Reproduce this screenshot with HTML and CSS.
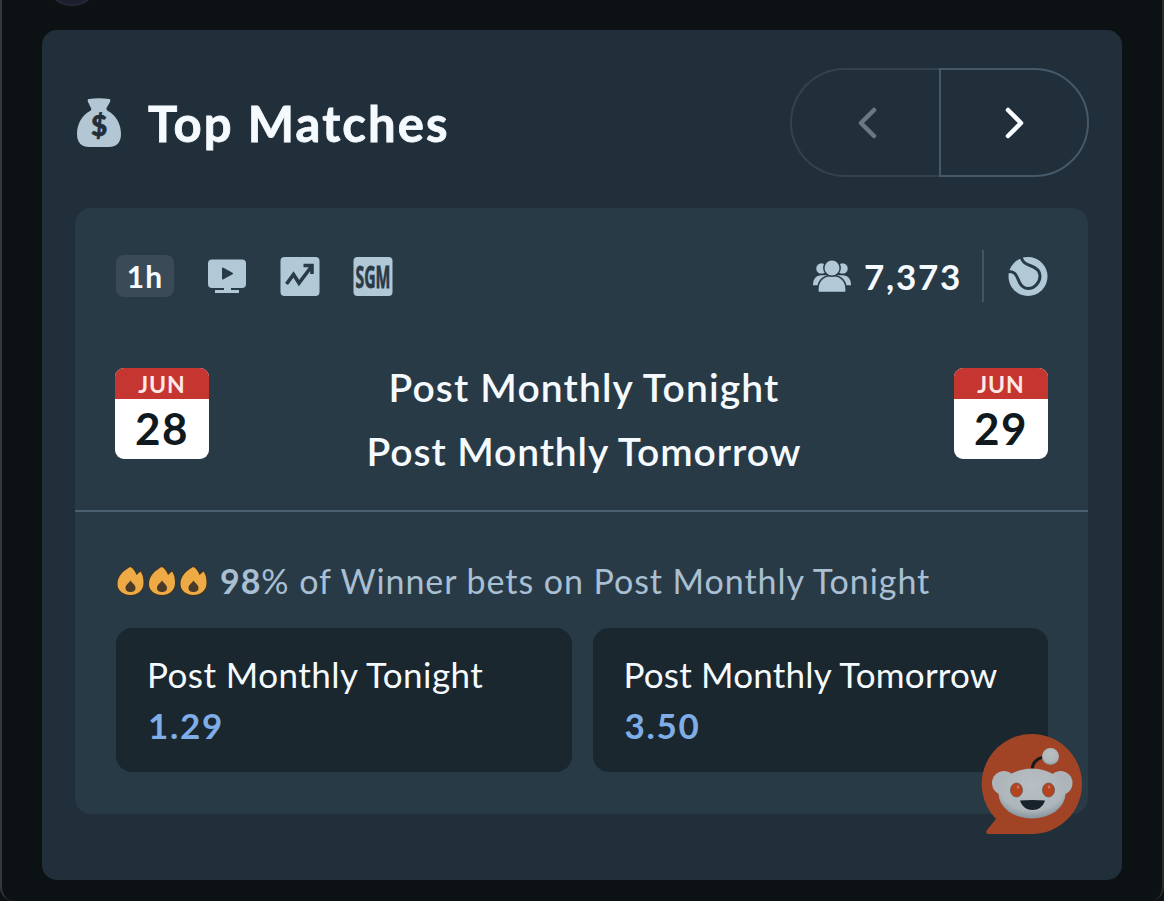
FILE: index.html
```
<!DOCTYPE html>
<html lang="en">
<head>
    <meta charset="UTF-8">
    <meta name="viewport" content="width=device-width, initial-scale=1.0">
    <title>Top Matches</title>
    <link rel="stylesheet" href="styles.css">
</head>
<body>
    <div class="frame">
        <div class="avatar-edge"></div>
        <section class="panel">
            <!-- Header Section -->
            <header class="panel-header">
                <svg class="bag-icon" viewBox="0 0 44 50">
                    <path d="M12 1Q22-0.500 32 1Q34 1 33 4L29.500 10Q29 12 31 13C39 17 44 26 44 36C44 45 39 49 32 49H12C5 49 0 45 0 36C0 26 5 17 13 13Q15 12 14 10L11 4Q10 1 12 1Z" fill="#b3c6d4"/>
                    <text x="22" y="38" class="bag-text">$</text>
                </svg>
                <h1>Top Matches</h1>
                <nav class="pager">
                    <button class="prev" aria-label="Previous">
                        <svg viewBox="0 0 20 32"><path d="M17 3L4 16L17 29"/></svg>
                    </button>
                    <button class="next" aria-label="Next">
                        <svg viewBox="0 0 20 32"><path d="M4 3L17 16L4 29"/></svg>
                    </button>
                </nav>
            </header>

            <!-- Match Card -->
            <article class="card">
                <div class="match">
                    <div class="meta">
                        <span class="time">1h</span>
                        <svg class="icon" viewBox="0 0 40 40">
                            <path d="M5 3.500H35Q39 3.500 39 7.500V28Q39 32 35 32H24V34H32V37H8V34H17V32H5Q1 32 1 28V7.500Q1 3.500 5 3.500Z" fill="#b1c8d6"/>
                            <path d="M16 12.500L25 17.500L16 22.500Z" fill="#293a47" stroke="#293a47" stroke-width="2" stroke-linejoin="round"/>
                        </svg>
                        <svg class="icon" viewBox="0 0 40 40">
                            <rect x=".5" y="1" width="39" height="39" rx="4" fill="#b1c8d6"/>
                            <path d="M6.500 28L13.500 18.500L19 27L31.500 10.500M23.500 9.500H32V18" fill="none" stroke="#293a47" stroke-width="3.600"/>
                        </svg>
                        <svg class="icon sgm-icon" viewBox="0 0 40 40">
                            <rect x=".5" y="1" width="39" height="39" rx="4" fill="#b1c8d6"/>
                            <text x="2.500" y="31.500" textLength="35" lengthAdjust="spacingAndGlyphs" class="sgm">SGM</text>
                        </svg>
                        <div class="viewers">
                            <svg class="people-icon" viewBox="0 0 40 32">
                                <g fill="#b1c8d6" stroke="#293a47" stroke-width="1.500">
                                    <circle cx="9.500" cy="8.500" r="6"/>
                                    <circle cx="30.500" cy="8.500" r="6"/>
                                    <path d="M0 26Q0 15 9 14.500H31Q40 15 40 26Z"/>
                                    <path d="M6 32.500C5 22 10 15.500 20 15.500S35 22 34 32.500Z"/>
                                    <circle cx="20" cy="8" r="8.200"/>
                                </g>
                            </svg>
                            <span class="count">7,373</span>
                            <span class="bar"></span>
                            <svg class="icon" viewBox="0 0 40 40">
                                <circle cx="20" cy="20.500" r="19.500" fill="#b1c8d6"/>
                                <path d="M-1 15.500C6 15 8 18 10 23C12 29 15 32.500 20 32.500C27 32.500 32 26 32 20C32 14 28 11.500 22 9.500C17 8 14 6 12.500-1" fill="none" stroke="#293a47" stroke-width="3"/>
                            </svg>
                        </div>
                    </div>

                    <div class="teams">
                        <div class="calendar"><span class="month">JUN</span><span class="day">28</span></div>
                        <div class="names">
                            <div class="name-tonight">Post Monthly Tonight</div>
                            <div class="name-tomorrow">Post Monthly Tomorrow</div>
                        </div>
                        <div class="calendar"><span class="month">JUN</span><span class="day">29</span></div>
                    </div>
                </div>

                <!-- Betting Section -->
                <div class="bets">
                    <div class="trend">
                        <svg class="fires" viewBox="0 0 92 32">
                            <defs>
                                <g id="flame">
                                    <path d="M14 1C9 4 1.500 9 1.500 18C1.500 25 8 29 14.500 29S27.500 25 27.500 17C27.500 12 26.500 8 24.500 5.500L20.500 9C19 5 17 2 14 1Z" fill="#edaa45" stroke="#423321" stroke-width="2" paint-order="stroke"/>
                                    <path d="M14.500 14.500C12 18 9.500 19 9.500 22C9.500 25 12 26 14.500 26S19.500 25 19.500 22C19.500 19 17 18 14.500 14.500Z" fill="#4a3b29"/>
                                </g>
                            </defs>
                            <use href="#flame" x="0" y="0"/>
                            <use href="#flame" x="31.500" y="0"/>
                            <use href="#flame" x="63" y="0"/>
                        </svg>
                        <p><b>98</b>% of Winner bets on Post Monthly Tonight</p>
                    </div>
                    <div class="options">
                        <div class="option">
                            <div class="option-name">Post Monthly Tonight</div>
                            <div class="odds">1.29</div>
                        </div>
                        <div class="option">
                            <div class="option-name tomorrow">Post Monthly Tomorrow</div>
                            <div class="odds">3.50</div>
                        </div>
                    </div>
                </div>
            </article>
        </section>

        <!-- Reddit badge over the card corner -->
        <svg class="reddit" viewBox="0 0 102 102">
            <defs>
                <radialGradient id="face" cx="50%" cy="35%" r="65%">
                    <stop offset="0" stop-color="#b9bfc3"/>
                    <stop offset=".75" stop-color="#aeb6bb"/>
                    <stop offset="1" stop-color="#8594a0"/>
                </radialGradient>
            </defs>
            <path d="M51 1A50 50 0 0 1 51 101H7Q4 100 6 97L15 86A50 50 0 0 1 51 1Z" fill="#a14425"/>
            <path d="M51 38C51 29 57 24 66 24" fill="none" stroke="#18191a" stroke-width="3.200"/>
            <circle cx="69.500" cy="23.500" r="8.500" fill="url(#face)"/>
            <circle cx="23" cy="50" r="12" fill="#adb5ba"/>
            <circle cx="79.500" cy="50" r="12" fill="#adb5ba"/>
            <ellipse cx="51" cy="60.500" rx="33.500" ry="25" fill="url(#face)"/>
            <ellipse cx="35.500" cy="57" rx="6" ry="7" fill="#b5431f" stroke="#665950" stroke-width=".8"/>
            <ellipse cx="67.500" cy="57" rx="6" ry="7" fill="#b5431f" stroke="#665950" stroke-width=".8"/>
            <ellipse cx="37" cy="54" rx="1.300" ry="1.800" fill="#c17b63"/>
            <ellipse cx="68" cy="54" rx="1.300" ry="1.800" fill="#c17b63"/>
            <path d="M39 67.500Q51 66.500 64 67.500C62 74 57 77 51.500 77S41 74 39 67.500Z" fill="#18222b"/>
        </svg>
    </div>
</body>
</html>
```
FILE: styles.css
```
* {
    box-sizing: border-box;
}

body {
    margin: 0;
    background-color: #0c1114;
    font-family: Lato, "Open Sans", sans-serif;
    color: #f5faff;
}

.frame {
    position: relative;
    height: 901px;
    padding: 30px 40px 21px;
    overflow: hidden;
    border-left: 2px solid #34383a;
    border-right: 2px solid #292d2f;
    border-radius: 0 0 14px 14px;
}

/* Bottom of the round item above the panel */
.avatar-edge {
    position: absolute;
    left: 42px;
    top: -50px;
    width: 56px;
    height: 56px;
    border-radius: 50%;
    background-color: #1b1e2c;
    border: 2px solid #252735;
}

.panel {
    height: 850px;
    padding: 38px 33px;
    border-radius: 15px;
    background-color: #212f3a;
}

.panel-header {
    display: flex;
    align-items: center;
    height: 109px;
    padding-left: 2px;
}

.bag-icon {
    width: 44px;
    height: 50px;
}

.bag-text {
    font-size: 28px;
    font-weight: 900;
    fill: #212f3a;
    stroke: #212f3a;
    stroke-width: 0.6px;
    text-anchor: middle;
}

h1 {
    margin: 0 0 0 27px;
    font-size: 49px;
    line-height: 60px;
    font-weight: bold;
    white-space: nowrap;
    letter-spacing: 2.1px;
    -webkit-text-stroke: 0.8px #f5faff;
}

.pager {
    display: flex;
    margin-left: auto;
}

.pager button {
    display: flex;
    align-items: center;
    justify-content: center;
    width: 150px;
    height: 109px;
    padding: 0;
    background: none;
    border: 2px solid #465969;
}

.pager .prev {
    width: 149px;
    padding-left: 2px;
    border-color: #34424d;
    border-right: none;
    border-radius: 55px 0 0 55px;
}

.pager .next {
    border-radius: 0 55px 55px 0;
}

.pager svg {
    width: 20px;
    height: 32px;
    fill: none;
    stroke: #fafdff;
    stroke-width: 4.5;
    stroke-linecap: round;
    stroke-linejoin: round;
}

.pager .prev svg {
    stroke: #6c7881;
}

/* Match card */
.card {
    height: 606px;
    margin: 31px 1px 0 0;
    border-radius: 16px;
    background-color: #293a47;
}

.match {
    height: 304px;
    padding: 42px 40px 0 41px;
    border-bottom: 2px solid #4a6070;
}

.meta {
    display: flex;
    align-items: center;
    height: 52px;
    gap: 33px;
}

.time {
    width: 58px;
    height: 42px;
    border-radius: 8px;
    background-color: #3a4a57;
    font-size: 30px;
    line-height: 42px;
    font-weight: bold;
    text-align: center;
    letter-spacing: 1px;
}

.icon {
    width: 40px;
    height: 40px;
}

.sgm-icon {
    overflow: visible;
}

.sgm {
    font-family: "Open Sans", sans-serif;
    font-size: 30px;
    font-weight: bold;
    fill: #293a47;
    stroke: #293a47;
    stroke-width: 0.8px;
}

.viewers {
    display: flex;
    align-items: center;
    margin-left: auto;
}

.people-icon {
    width: 40px;
    height: 32px;
}

.count {
    margin-left: 12px;
    width: 98px;
    font-size: 35px;
    font-weight: bold;
    white-space: nowrap;
    letter-spacing: 1.7px;
}

.bar {
    width: 2px;
    height: 52px;
    margin: 0 24px 0 20px;
    background-color: #435565;
}

.teams {
    display: flex;
    justify-content: space-between;
    margin: 53px 0 0 -1px;
}

.calendar {
    display: flex;
    flex-direction: column;
    width: 94px;
    height: 91px;
    margin-top: 13px;
    border-radius: 9px;
    overflow: hidden;
    background-color: #fff;
    text-align: center;
}

.month {
    height: 31px;
    background-color: #c53630;
    color: #ffe9e8;
    font-size: 23px;
    line-height: 32px;
    font-weight: bold;
    letter-spacing: 1px;
}

.day {
    color: #10191e;
    font-size: 44px;
    line-height: 58px;
    font-weight: bold;
    letter-spacing: 1.5px;
}

.names {
    text-align: center;
    font-size: 39px;
    line-height: 64px;
    font-weight: 600;
    white-space: nowrap;
}

.name-tonight {
    letter-spacing: 1.15px;
    padding-left: 5px;
}

.name-tomorrow {
    letter-spacing: 0.9px;
    padding-left: 5px;
}

/* Betting section */
.bets {
    padding: 44px 40px 0 41px;
}

.trend {
    display: flex;
    align-items: center;
    height: 52px;
    color: #a9bfd2;
}

.trend p {
    margin: -2px 0 0 12px;
    font-size: 34px;
    line-height: 52px;
    white-space: nowrap;
    letter-spacing: 0.94px;
}

.fires {
    width: 92px;
    height: 32px;
}

.options {
    display: flex;
    gap: 21px;
    margin-top: 20px;
}

.option {
    flex: 1;
    height: 144px;
    padding: 20px 31px;
    border-radius: 16px;
    background-color: #1b272e;
}

.option-name {
    font-size: 35px;
    line-height: 52px;
    white-space: nowrap;
    letter-spacing: 0.45px;
}

.option-name.tomorrow {
    letter-spacing: 0.2px;
}

.odds {
    padding-left: 1px;
    color: #7eade8;
    font-size: 35px;
    line-height: 51px;
    font-weight: bold;
    letter-spacing: 1.7px;
}

.reddit {
    position: absolute;
    left: 979px;
    top: 733px;
    width: 102px;
    height: 102px;
}
```
